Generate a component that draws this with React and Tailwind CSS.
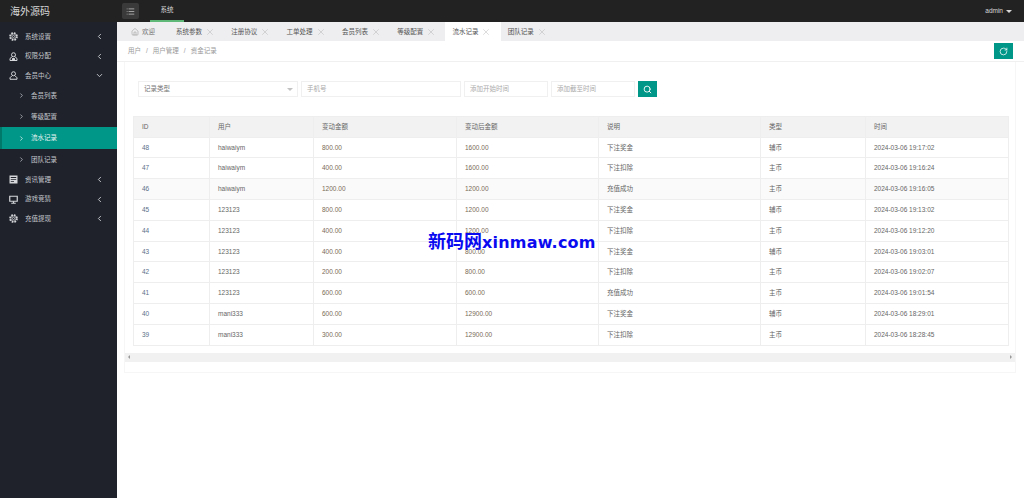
import { ChevronDown, ChevronLeft, ChevronRight, House, List, RotateCw, Search, X } from "lucide-react";

const font = "font-['Liberation_Sans','Noto_Sans_CJK_SC',sans-serif]";

const tabs = ["系统参数", "注册协议", "工单处理", "会员列表", "等级配置", "流水记录", "团队记录"];

const rows = [
  ["48", "haiwaiym", "800.00", "1600.00", "下注奖金", "辅币", "2024-03-06 19:17:02"],
  ["47", "haiwaiym", "400.00", "1600.00", "下注扣除", "主币", "2024-03-06 19:16:24"],
  ["46", "haiwaiym", "1200.00", "1200.00", "充值成功", "主币", "2024-03-06 19:16:05"],
  ["45", "123123", "800.00", "1200.00", "下注奖金", "辅币", "2024-03-06 19:13:02"],
  ["44", "123123", "400.00", "1200.00", "下注扣除", "主币", "2024-03-06 19:12:20"],
  ["43", "123123", "400.00", "800.00", "下注奖金", "辅币", "2024-03-06 19:03:01"],
  ["42", "123123", "200.00", "800.00", "下注扣除", "主币", "2024-03-06 19:02:07"],
  ["41", "123123", "600.00", "600.00", "充值成功", "主币", "2024-03-06 19:01:54"],
  ["40", "mani333", "600.00", "12900.00", "下注奖金", "辅币", "2024-03-06 18:29:01"],
  ["39", "mani333", "300.00", "12900.00", "下注扣除", "主币", "2024-03-06 18:28:45"],
];

function GearIcon() {
  return (
    <svg width="9" height="9" viewBox="0 0 18 18" fill="none" stroke="currentColor">
      <circle cx="9" cy="9" r="7" strokeWidth="3.4" strokeDasharray="3.4 2.1" />
      <circle cx="9" cy="9" r="5.2" strokeWidth="1.4" />
      <circle cx="9" cy="9" r="2.2" strokeWidth="1.6" />
    </svg>
  );
}

function UserIcon() {
  return (
    <svg width="9" height="9" viewBox="0 0 18 18" fill="none" stroke="currentColor" strokeWidth="2">
      <circle cx="9" cy="5.5" r="4" />
      <path d="M6 9.5 2 13.5V16.5H16V13.5L12 9.5" />
    </svg>
  );
}

function AdminIcon() {
  return (
    <svg width="9" height="9" viewBox="0 0 18 18" fill="none" stroke="currentColor" strokeWidth="2">
      <circle cx="9" cy="5.5" r="4" />
      <path d="M6 9.5 2 13V17H16V13L12 9.5" />
      <path d="M7 13H11V17H7Z" fill="currentColor" />
    </svg>
  );
}

function NewsIcon() {
  return (
    <svg width="9" height="9" viewBox="0 0 18 18" fill="currentColor">
      <path d="M1 1H17V17H1ZM3.5 4V6H14.5V4ZM3.5 8.5V10H14.5V8.5ZM3.5 12.5V14H10V12.5Z" fillRule="evenodd" />
    </svg>
  );
}

function ScreenIcon() {
  return (
    <svg width="9" height="9" viewBox="0 0 18 18" fill="none" stroke="currentColor" strokeWidth="2.4">
      <path d="M1.5 2.5H16.5V12.5H1.5Z" />
      <path d="M9 12.5V16M4.5 16.5H13.5" />
    </svg>
  );
}

function MenuItem({ icon: Icon, label, open }) {
  const Arrow = open ? ChevronDown : ChevronLeft;
  return (
    <div className="flex h-[19.4px] items-center pl-[9px] pr-[13px] text-[#c4c7cc]">
      <span className="text-[#d5d7da]"><Icon /></span>
      <span className="ml-[7px] flex-1 text-[6.5px]">{label}</span>
      <Arrow size={9} strokeWidth={2.5} />
    </div>
  );
}

function SubItem({ label, active }) {
  return (
    <div
      className={
        active
          ? "flex h-[22px] items-center border-l-2 border-[#00796b] bg-[#009688] pl-[15.5px] text-[#e8f5f3]"
          : "flex h-[21px] items-center pl-[17.5px] text-[#c4c7cc]"
      }
    >
      <ChevronRight size={7} strokeWidth={2.5} />
      <span className="ml-[6.5px] text-[6.5px]">{label}</span>
    </div>
  );
}

function Sidebar() {
  return (
    <aside className="w-[117px] shrink-0 bg-[#1f222b] pt-[5px]">
      <MenuItem icon={GearIcon} label="系统设置" />
      <MenuItem icon={AdminIcon} label="权限分配" />
      <MenuItem icon={UserIcon} label="会员中心" open />
      <SubItem label="会员列表" />
      <SubItem label="等级配置" />
      <SubItem label="流水记录" active />
      <SubItem label="团队记录" />
      <MenuItem icon={NewsIcon} label="资讯管理" />
      <MenuItem icon={ScreenIcon} label="游戏竞猜" />
      <MenuItem icon={GearIcon} label="充值提现" />
    </aside>
  );
}

function Tabs() {
  return (
    <div className="flex h-[19px] items-center bg-[#eeeef0] text-[6.5px] text-[#555]">
      <div className="flex h-full w-[52px] items-center pl-[14px] text-[#777]">
        <House size={8} strokeWidth={1.2} />
        <span className="ml-[3px]">欢迎</span>
      </div>
      {tabs.map((tab) => (
        <div
          key={tab}
          className={`flex h-full w-[55.3px] items-center pl-[7px] ${tab === "流水记录" ? "bg-white" : ""}`}
        >
          <span>{tab}</span>
          <X size={10} strokeWidth={0.8} className="ml-[3px] text-[#999]" />
        </div>
      ))}
    </div>
  );
}

function Field({ width, label, children }) {
  return (
    <div className={`flex h-[16px] items-center justify-between border border-[#f0f0f0] pl-[5px] pr-[4px] text-[6.5px] ${width}`}>
      <span>{label}</span>
      {children}
    </div>
  );
}

function Table() {
  return (
    <table className="w-[875px] table-fixed border-collapse text-left text-[6.5px] text-[#666]">
      <colgroup>
        <col className="w-[76px]" />
        <col className="w-[104px]" />
        <col className="w-[143px]" />
        <col className="w-[142px]" />
        <col className="w-[162px]" />
        <col className="w-[105px]" />
        <col className="w-[143px]" />
      </colgroup>
      <thead>
        <tr className="h-[20.6px] bg-[#f2f2f2]">
          {["ID", "用户", "变动金额", "变动后金额", "说明", "类型", "时间"].map((h) => (
            <th key={h} className="border border-[#eeeeee] pl-[8px] font-normal">{h}</th>
          ))}
        </tr>
      </thead>
      <tbody>
        {rows.map((row, i) => (
          <tr key={row[0]} className={`h-[20.8px] ${i === 2 ? "bg-[#fafafa]" : ""}`}>
            {row.map((cell, j) => (
              <td
                key={j}
                className={`border border-[#eeeeee] pl-[8px] ${j === 0 ? "text-[#5a6f88]" : ""} ${j === 2 || j === 3 ? "text-[#7a6a58]" : ""}`}
              >
                {cell}
              </td>
            ))}
          </tr>
        ))}
      </tbody>
    </table>
  );
}

export default function App() {
  return (
    <div className={`relative flex h-[498px] w-[1024px] flex-col overflow-hidden bg-white ${font}`}>
      <header className="flex h-[22px] shrink-0 items-center bg-[#222222]">
        <div className="w-[122px] pl-[10px] text-[10px] text-[#d8d8d8]">海外源码</div>
        <div className="flex h-[16px] w-[17px] items-center justify-center rounded-[2px] bg-[#3a3a3a] text-[#c4c4c4]">
          <List size={9} />
        </div>
        <div className="ml-[11px] flex h-full w-[34px] items-center justify-center border-b-2 border-[#5fb878] text-[6.5px] text-[#d8d8d8]">
          系统
        </div>
        <div className="ml-auto flex items-center pr-[12px] text-[6.5px] text-[#d8d8d8]">
          admin
          <span className="ml-[3px] h-0 w-0 border-x-[3px] border-t-[3px] border-x-transparent border-t-[#d8d8d8]" />
        </div>
      </header>

      <div className="flex flex-1">
        <Sidebar />
        <main className="min-w-0 flex-1">
          <Tabs />
          <div className="flex h-[21px] items-center justify-between border-b border-[#f0f0f0] pl-[11px] pr-[11px] text-[6.5px] text-[#999]">
            <span>用户<span className="mx-[5px]">/</span>用户管理<span className="mx-[5px]">/</span>资金记录</span>
            <button className="flex h-[16px] w-[19px] items-center justify-center bg-[#009688] text-white">
              <RotateCw size={9} />
            </button>
          </div>

          <section className="ml-[7px] mr-[8px] h-[311px] border-x border-b border-[#f6f6f6] pt-[19px]">
            <div className="flex gap-[3px] pl-[13px] text-[#777]">
              <Field width="w-[160px]" label="记录类型">
                <span className="h-0 w-0 border-x-[3px] border-t-[3px] border-x-transparent border-t-[#c2c2c2]" />
              </Field>
              <Field width="w-[160px] text-[#aaa]" label="手机号" />
              <Field width="w-[84px] text-[#aaa]" label="添加开始时间" />
              <Field width="w-[84px] text-[#aaa]" label="添加截至时间" />
              <button className="flex h-[16px] w-[19px] items-center justify-center bg-[#009688] text-white">
                <Search size={9} strokeWidth={2.4} />
              </button>
            </div>
            <div className="mt-[19px] pl-[8px]">
              <Table />
            </div>
            <div className="mt-[7px] flex h-[9px] items-center justify-between bg-[#f1f1f1] px-[3px] text-[#999]">
              <span className="h-0 w-0 border-y-[2px] border-r-[2px] border-y-transparent border-r-[#999]" />
              <span className="h-0 w-0 border-y-[2px] border-l-[2px] border-y-transparent border-l-[#999]" />
            </div>
          </section>
        </main>
      </div>

      <div className="absolute left-[428px] top-[231px] flex items-baseline font-bold leading-[22px] text-[#0a0af0] [font-family:'DejaVu_Sans','Noto_Sans_CJK_SC',sans-serif]">
        <span className="text-[18px]">新码网</span>
        <span className="text-[16px] font-semibold tracking-[0.2px]">xinmaw.com</span>
      </div>
    </div>
  );
}
